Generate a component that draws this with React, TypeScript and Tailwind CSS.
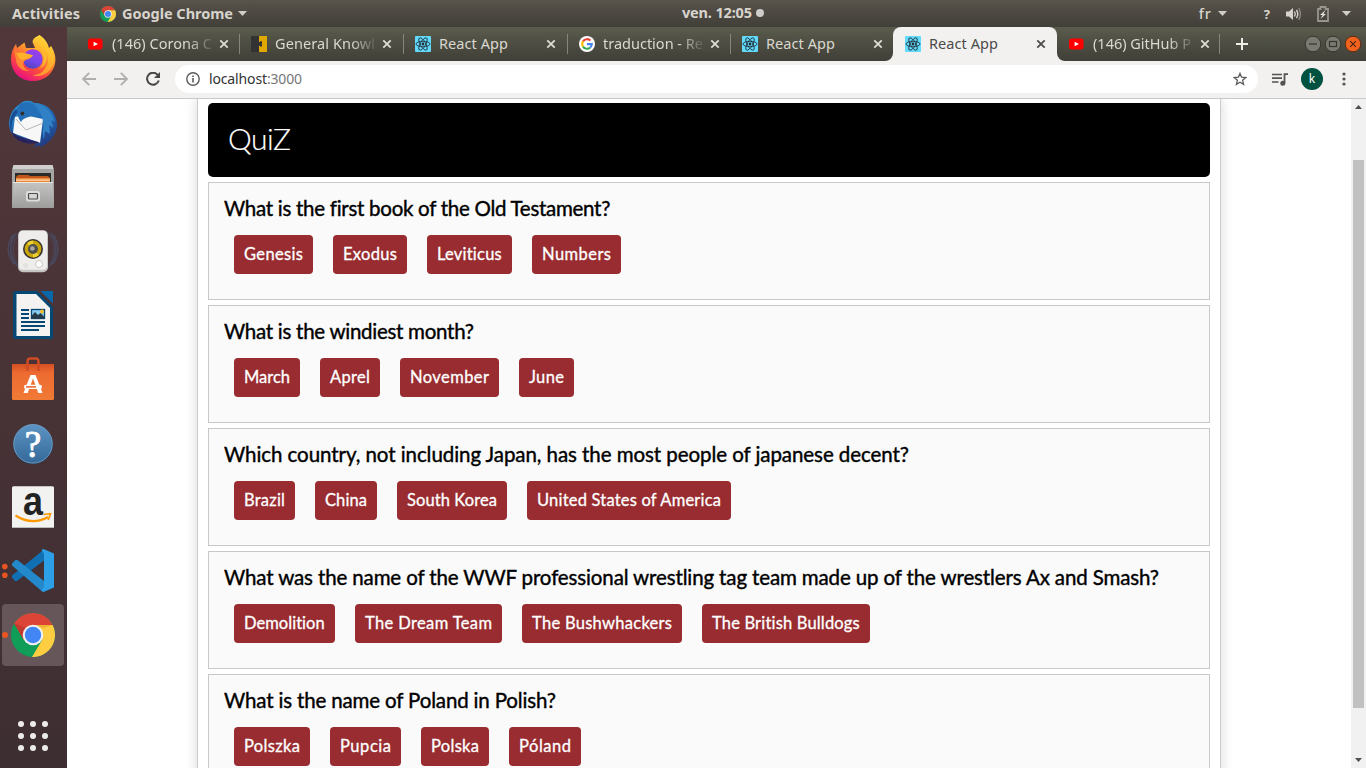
import { useLayoutEffect, useRef } from "react";
import type { ReactNode } from "react";

/** One line of text whose letter spacing is tuned so that it fills `width` pixels. */
function FitText({ text, width, className = "" }: { text: string; width: number; className?: string }) {
  const ref = useRef<HTMLSpanElement>(null);
  useLayoutEffect(() => {
    const el = ref.current;
    if (!el) return;
    el.style.letterSpacing = "0px";
    const natural = el.getBoundingClientRect().width;
    const spacing = (width - natural) / Math.max(1, text.length - 1);
    el.style.letterSpacing = `${spacing}px`;
    el.style.marginRight = `${-spacing}px`;
  }, [text, width]);
  return (
    <span ref={ref} className={`inline-block shrink-0 whitespace-pre ${className}`}>
      {text}
    </span>
  );
}

function ChromeLogo({ size }: { size: number }) {
  return (
    <svg width={size} height={size} viewBox="0 0 44 44" className="shrink-0">
      <circle cx="22" cy="22" r="22" fill="#109d58" />
      <path d="M3.2 10.6A22 22 0 0 1 41.6 12H22L12.5 26.5Z" fill="#dc4437" />
      <path d="M41.6 12A22 22 0 0 1 21 44L31.4 26.5L22 12Z" fill="#ffcd41" />
      <path d="M3.2 10.6L12.8 27L15 15Z" fill="#b8352b" opacity=".7" />
      <path d="M22 12H41.6L32 15Z" fill="#e3a52c" opacity=".6" />
      <circle cx="22" cy="22" r="10.3" fill="#f1f1f1" />
      <circle cx="22" cy="22" r="8.2" fill="#4285f4" />
    </svg>
  );
}

function YoutubeIcon() {
  return (
    <svg width="16" height="16" viewBox="0 0 16 16" className="shrink-0">
      <rect x="0" y="2.5" width="14.5" height="11" rx="2.8" fill="#f00" />
      <path d="M5.6 5.7L10 8L5.6 10.3Z" fill="#fff" />
    </svg>
  );
}

function ReactIcon() {
  return (
    <svg width="16" height="16" viewBox="0 0 16 16" className="shrink-0">
      <rect width="16" height="16" rx="1" fill="#61dafb" />
      <g fill="none" stroke="#20303a" strokeWidth=".85">
        <ellipse cx="8" cy="8" rx="7" ry="2.7" />
        <ellipse cx="8" cy="8" rx="7" ry="2.7" transform="rotate(60 8 8)" />
        <ellipse cx="8" cy="8" rx="7" ry="2.7" transform="rotate(120 8 8)" />
      </g>
      <circle cx="8" cy="8" r="1.4" fill="#20303a" />
    </svg>
  );
}

function GoogleIcon() {
  return (
    <svg width="16" height="16" viewBox="0 0 16 16" className="shrink-0">
      <circle cx="8" cy="8" r="8" fill="#fff" />
      <g fill="none" strokeWidth="2.1">
        <path d="M4 5.4A4.8 4.8 0 0 1 11.5 4.6" stroke="#ea4335" />
        <path d="M4 10.6A4.9 4.9 0 0 1 4 5.4" stroke="#fbbc05" />
        <path d="M11.3 11.5A4.8 4.8 0 0 1 4 10.6" stroke="#34a853" />
        <path d="M8 8.1H12.8A4.8 4.8 0 0 1 11.3 11.5" stroke="#4285f4" />
      </g>
    </svg>
  );
}

function PuzzleIcon() {
  return (
    <svg width="16" height="16" viewBox="0 0 16 16" className="shrink-0">
      <rect width="8" height="16" fill="#333" />
      <rect x="8" width="8" height="16" fill="#e0a800" />
      <path d="M7.5 6H9V5.3H11V10.5H9V9.8H7.5Z" fill="#333" />
    </svg>
  );
}

function CloseIcon({ color }: { color: string }) {
  return (
    <svg width="10" height="10" viewBox="0 0 10 10" className="shrink-0">
      <path d="M1.3 1.3L8.7 8.7M8.7 1.3L1.3 8.7" stroke={color} strokeWidth="1.8" />
    </svg>
  );
}

type Tab = { icon: ReactNode; title: string; textWidth: number; width: string; active?: boolean; fade?: boolean; line?: boolean };

const tabs: Tab[] = [
  { icon: <YoutubeIcon />, title: "(146) Corona C", textWidth: 100, width: "w-[163px]", fade: true },
  { icon: <PuzzleIcon />, title: "General Knowl", textWidth: 100, width: "w-[164px]", fade: true, line: true },
  { icon: <ReactIcon />, title: "React App", textWidth: 69, width: "w-[164px]", line: true },
  { icon: <GoogleIcon />, title: "traduction - Re", textWidth: 100, width: "w-[163px]", fade: true, line: true },
  { icon: <ReactIcon />, title: "React App", textWidth: 69, width: "w-[163px]", line: true },
  { icon: <ReactIcon />, title: "React App", textWidth: 69, width: "w-[164px]", active: true },
  { icon: <YoutubeIcon />, title: "(146) GitHub P", textWidth: 98, width: "w-[163px]", fade: true },
];

function TabItem({ tab }: { tab: Tab }) {
  return (
    <div className={`relative flex h-[34px] shrink-0 items-center pl-3 ${tab.width} ${tab.active ? "rounded-t-lg bg-[#f2f1f0]" : ""}`}>
      {tab.line && <span className="absolute left-0 top-[7px] h-5 w-px bg-[#85857d]" />}
      {tab.active && (
        <>
          <svg className="absolute -left-2 bottom-0" width="8" height="8">
            <path d="M8 0V8H0A8 8 0 0 0 8 0Z" fill="#f2f1f0" />
          </svg>
          <svg className="absolute -right-2 bottom-0" width="8" height="8">
            <path d="M0 0V8H8A8 8 0 0 1 0 0Z" fill="#f2f1f0" />
          </svg>
        </>
      )}
      {tab.icon}
      <div
        className={`ml-2 flex w-[102px] overflow-hidden text-[14.5px] leading-5 ${tab.active ? "text-[#4b4b48]" : "text-[#dad8cf]"} ${
          tab.fade ? "[mask-image:linear-gradient(to_right,black_74%,transparent_102%)]" : ""
        }`}
      >
        <FitText text={tab.title} width={tab.textWidth} className="-mt-px mb-px" />
      </div>
      <span className="ml-[5px] flex">
        <CloseIcon color={tab.active ? "#4b4b48" : "#dedcd4"} />
      </span>
    </div>
  );
}

function DockSlot({ children, label }: { children: ReactNode; label: string }) {
  return (
    <svg width="67" height="64" viewBox="0 0 67 64" className="shrink-0" aria-label={label}>
      {children}
    </svg>
  );
}

function Dock() {
  return (
    <nav className="flex w-[67px] shrink-0 flex-col bg-linear-to-b from-[#52373a] to-[#3d2e32]">
      <div className="-mt-px flex flex-col">
        <DockSlot label="Firefox">
          <defs>
            <linearGradient id="ff" x1=".8" y1="0" x2=".25" y2="1">
              <stop offset="0" stopColor="#fff044" />
              <stop offset=".35" stopColor="#ffa52a" />
              <stop offset=".65" stopColor="#ff5038" />
              <stop offset="1" stopColor="#e5098a" />
            </linearGradient>
            <linearGradient id="ffb" x1=".7" y1="0" x2=".3" y2="1">
              <stop offset="0" stopColor="#a33ce8" />
              <stop offset=".55" stopColor="#7747ee" />
              <stop offset="1" stopColor="#4c46b8" />
            </linearGradient>
          </defs>
          <path d="M39.5 9C44 12 48 17 49 22L51.2 20C54 25 56 30 55.3 36C54 47 45 55 33 55C20 55 11 46 11 33C11 27 13 22 16 18L17 22L24.5 16.5L26 22L35 22L32.5 16C33 12 36 11 39.5 9Z" fill="url(#ff)" />
          <path d="M40 10C36 14 39 19 43 22C48 27 50 34 46 41C43 47 38 49 32 49C42 53 53 45 54 35C55 29 52 25 50.7 22.5L48.5 25C48 18 43 14 40 10Z" fill="#ffc52e" opacity=".65" />
          <circle cx="32.8" cy="33" r="9.8" fill="url(#ffb)" />
          <path d="M15 24C18 27 19 29 25 28.5L33 29.5C30.5 33.5 27 33 24.5 35C21 38 25 44 30 45C22 46 16 40 16 33C15 30 14.5 27 15 24Z" fill="#ff8932" />
          <path d="M17 27C20 25.5 26 27 33 29.3C30 33 26 32 23 34C20 34 17 30 17 27Z" fill="#ffb12c" />
          <path d="M33 23C39 21 43 26 43.5 31C44.5 36 42 41 38 43C45 41 48 34 46 28C44 23 39 20 33 23Z" fill="#ffba32" />
        </DockSlot>
        <DockSlot label="Thunderbird">
          <defs>
            <linearGradient id="tb" x1=".2" y1="0" x2=".7" y2="1">
              <stop offset="0" stopColor="#2f95d2" />
              <stop offset=".5" stopColor="#1f66b3" />
              <stop offset="1" stopColor="#233a80" />
            </linearGradient>
          </defs>
          <g transform="translate(0 1)">
            <path d="M20 13C24 8.5 31 9 34 12C46 11.5 57 21 57 34C57 43 50 52 39 57L41 54L33 56.5L37 52C21 52 9 45 9 33C9 25 13 17 20 13Z" fill="url(#tb)" />
            <path d="M23 17C16 23 10 29 12 39L14 45C9 39 8 26 15 19Z" fill="#184d94" />
            <path d="M15 26L24 24L43 28L40 52L13 42Z" fill="#f7f7f7" />
            <path d="M16 28L26 39L43 32" fill="none" stroke="#b5b5b5" strokeWidth="1" />
            <path d="M12 41C19 47 28 48 40 51.5C27 55 14 50 12 41Z" fill="#27235f" />
            <path d="M20 13C31 8 38 15 37 21C33 27 24 25 21 31C16 24 16 17 20 13Z" fill="#2470b8" />
            <path d="M34 12.5C46 14 52 21 55 31L51.5 29L53.5 37L49 34L50 43L45 40L44 48C41 42 45 35 42.5 28C41 22 38 17 34 12.5Z" fill="#2f80c4" />
            <circle cx="22.4" cy="22.5" r="1.9" fill="#342f31" />
          </g>
        </DockSlot>
        <DockSlot label="Files">
          <defs>
            <linearGradient id="cab" x1="0" y1="0" x2="0" y2="1">
              <stop offset="0" stopColor="#c4c4c2" />
              <stop offset="1" stopColor="#9d9d9b" />
            </linearGradient>
          </defs>
          <path d="M13.5 11H52.5L54 16V52.5Q54 54 52.5 54H13.5Q12 54 12 52.5V16Z" fill="#a5a5a3" />
          <path d="M13.5 11H52.5L53.5 15H12.5Z" fill="#cfcfcd" />
          <rect x="15" y="19" width="36" height="10" fill="#2c2b2a" />
          <path d="M16 23L18 21H28L30 22H48L50 24V29H16Z" fill="#c0571d" />
          <rect x="16" y="24" width="34" height="4" fill="#f0883a" />
          <rect x="16" y="25.5" width="34" height="1.2" fill="#ffe2b7" />
          <path d="M13.5 28H52.5L54 53Q54 54 52.5 54H13.5Q12 54 12 53Z" fill="url(#cab)" />
          <path d="M13 28.5H53" stroke="#e7e7e6" strokeWidth="1" />
          <rect x="26" y="37" width="14" height="10.5" rx="2.5" fill="#dededc" />
          <rect x="28.5" y="39.5" width="9" height="5.5" rx=".8" fill="#d5d5d3" stroke="#4c4c4a" strokeWidth="1.2" />
        </DockSlot>
        <DockSlot label="Rhythmbox">
          <g fill="none" stroke="#47597f" strokeWidth="1.5" opacity=".55">
            <path d="M16 15Q5 32 17 48M13 17Q3 32 14 46M51 15Q61 32 50 48M54 17Q62 32 53 46" />
            <path d="M21 12Q6 31 20 51M46 12Q61 31 47 51" opacity=".6" />
          </g>
          <rect x="18" y="12.2" width="30" height="42" rx="5" fill="#c6c5c1" />
          <rect x="19" y="12.7" width="28" height="39" rx="4" fill="#eeedeb" />
          <circle cx="33" cy="31" r="10" fill="#373532" />
          <circle cx="33" cy="31" r="8.4" fill="#c9a508" />
          <path d="M33 31L27 25A8.4 8.4 0 0 1 33 22.5ZM33 31L39 37A8.4 8.4 0 0 1 33 39.5Z" fill="#ecd02f" />
          <circle cx="33" cy="31" r="5" fill="#504e4a" />
          <circle cx="32.4" cy="30.5" r="2.3" fill="#aaa8a3" />
          <circle cx="39" cy="46" r="3.5" fill="#fff" stroke="#c9c8c3" />
          <path d="M24 46H27V49H24Z" fill="none" stroke="#d9d8d3" />
        </DockSlot>
        <DockSlot label="LibreOffice Writer">
          <path d="M16 9H37L53 25V55Q53 57 51 57H15Q13 57 13 55V12Q13 9 16 9Z" fill="#064874" />
          <path d="M16.5 12H36L50 26V54H16.5Z" fill="#f4f3f2" />
          <path d="M40.5 9H53V21.5Z" fill="#0969a8" />
          <g stroke="#064874" strokeWidth="2">
            <path d="M21 28H29M21 32H29M21 36H29M21 40H45M21 44H45M21 48H39" />
          </g>
          <rect x="31.5" y="27.5" width="13" height="9" fill="#89cdf0" stroke="#064874" strokeWidth="1.3" />
          <circle cx="42" cy="29.5" r="2" fill="#f3bb27" />
          <path d="M31.5 36.5V34L35 30L38 33L40.5 31L44.5 35V36.5Z" fill="#263b48" />
        </DockSlot>
        <DockSlot label="Ubuntu Software">
          <defs>
            <linearGradient id="bag" x1="0" y1="0" x2="0" y2="1">
              <stop offset="0" stopColor="#d54f22" />
              <stop offset=".25" stopColor="#ed6b32" />
              <stop offset="1" stopColor="#f17a35" />
            </linearGradient>
          </defs>
          <path d="M12 18H54V52.5Q54 54 52.5 54H13.5Q12 54 12 52.5Z" fill="url(#bag)" />
          <path d="M27.5 25V16Q27.5 12.5 30 12.5H36Q38.5 12.5 38.5 16V25" fill="none" stroke="#cf4c22" strokeWidth="2.5" />
          <path d="M23.5 47L30.5 29H35.5L42.5 47H38.3L33 32.5L27.7 47Z" fill="#fff" />
          <rect x="24" y="38.8" width="18" height="4.2" rx="2.1" fill="#fff" />
          <path d="M26 40.9H36" stroke="#ec6a31" strokeWidth="1.6" />
        </DockSlot>
        <DockSlot label="Help">
          <defs>
            <linearGradient id="hlp" x1="0" y1="0" x2="0" y2="1">
              <stop offset="0" stopColor="#5c94c3" />
              <stop offset="1" stopColor="#34699a" />
            </linearGradient>
          </defs>
          <circle cx="33" cy="34.3" r="20" fill="#27405c" />
          <circle cx="33" cy="33.8" r="19.3" fill="url(#hlp)" stroke="#7ca5c8" strokeWidth=".8" />
          <text x="33" y="47" textAnchor="middle" fill="#fff" stroke="#fff" strokeWidth=".9" fontSize="37" fontFamily="Liberation Serif, serif">?</text>
        </DockSlot>
        <DockSlot label="Amazon">
          <rect x="12" y="12.2" width="42" height="41.8" rx="1.5" fill="#f2f2f1" />
          <path d="M12 53.5H54" stroke="#bcbcba" strokeWidth="1" />
          <text x="33" y="41" textAnchor="middle" fill="#222" fontSize="40" fontFamily="Liberation Sans, sans-serif" fontWeight="bold" textLength="20" lengthAdjust="spacingAndGlyphs">a</text>
          <path d="M15.5 41.5Q32 52 48 43" fill="none" stroke="#ff9900" strokeWidth="2.3" />
          <path d="M43.5 40.5L50.5 39.7L48.2 46" fill="none" stroke="#ff9900" strokeWidth="1.7" />
        </DockSlot>
        <DockSlot label="Visual Studio Code">
          <circle cx="4.8" cy="28.6" r="2.8" fill="#e95420" />
          <circle cx="4.8" cy="37.2" r="2.8" fill="#e95420" />
          <path d="M12 37.5V39.5L15 43L17 43L44 22.5V11.5Z" fill="#1070b3" />
          <path d="M12 25.5L15.5 22L17.5 22L44 43V54L41 52.5L12 27.5Z" fill="#2489ca" />
          <path d="M43.5 11L54 15.5V49.5L43.5 54L41.5 53L44 49V16L41.5 12Z" fill="#2c9fe7" />
        </DockSlot>
        <div className="relative flex h-16 w-[67px] pl-0.5 pt-0.5">
          <div className="flex h-[62px] w-[62px] items-center justify-center rounded bg-[#675659]">
            <ChromeLogo size={44} />
          </div>
          <span className="absolute left-0.5 top-[30px] size-[5.5px] rounded-full bg-[#e95420]" />
        </div>
      </div>
      <div className="ml-[18px] mt-[55px] grid w-[30px] grid-cols-3 gap-1.5">
        {Array.from({ length: 9 }, (_, i) => (
          <span key={i} className="size-1.5 rounded-full bg-[#eeeceb]" />
        ))}
      </div>
    </nav>
  );
}

function CaretDown() {
  return (
    <svg width="9" height="5" viewBox="0 0 9 5">
      <path d="M0 0H9L4.5 5Z" fill="#cfcdc9" />
    </svg>
  );
}

function TopBar() {
  return (
    <header className="flex h-[27px] shrink-0 items-center bg-linear-to-b from-[#58534b] to-[#413f39] text-[14.5px] font-bold text-[#d8d4cd]">
      <div className="flex w-[682px] items-center pl-3">
        <FitText text="Activities" width={68} />
        <span className="ml-5 mr-[6px] flex">
          <ChromeLogo size={16} />
        </span>
        <FitText text="Google Chrome" width={111} />
        <span className="ml-[5px]">
          <CaretDown />
        </span>
      </div>
      <div className="flex items-center">
        <FitText text="ven. 12:05" width={70} className="-mt-px" />
        <span className="-mt-px ml-1 size-2 rounded-full bg-[#cfcdc9]" />
      </div>
      <div className="ml-auto flex items-center pr-[15px]">
        <FitText text="fr" width={12} className="font-medium" />
        <span className="ml-[7px]">
          <CaretDown />
        </span>
        <FitText text="?" width={7} className="ml-[37px] mt-0.5 text-[13px]" />
        <svg className="ml-4" width="16" height="14" viewBox="0 0 16 14">
          <path d="M0 4.5H3L7 1V13L3 9.5H0Z" fill="#d8d4cd" />
          <path d="M8.5 4.5Q10 7 8.5 9.5M10.5 2.8Q13 7 10.5 11.2" fill="none" stroke="#d8d4cd" strokeWidth="1.4" />
          <path d="M12.8 1.2Q16 7 12.8 12.8" fill="none" stroke="#8b8881" strokeWidth="1.4" />
        </svg>
        <svg className="ml-[15px]" width="12" height="16" viewBox="0 0 12 16">
          <path d="M1 3H3.5V1H8.5V3H11V15H1Z" fill="none" stroke="#98958e" strokeWidth="1.8" />
          <path d="M8.5 4L3 9H5.5L3.5 13L9 8H6.5Z" fill="#e2dfd9" />
        </svg>
        <span className="ml-[13px]">
          <CaretDown />
        </span>
      </div>
    </header>
  );
}

function TabStrip() {
  return (
    <div className="flex h-[34px] shrink-0 items-center bg-linear-to-b from-[#5a5c4c] to-[#403f39] pl-[9px]">
      {tabs.map((tab, i) => (
        <TabItem key={i} tab={tab} />
      ))}
      <span className="-ml-px h-5 w-px bg-[#85857d]" />
      <svg className="ml-4" width="12" height="12" viewBox="0 0 12 12">
        <path d="M6 0V12M0 6H12" stroke="#eeece6" strokeWidth="2" />
      </svg>
      <svg className="ml-auto mr-[4px]" width="58" height="18" viewBox="0 0 58 18">
        <circle cx="9" cy="9" r="7.8" fill="#7b7a72" stroke="#37362f" />
        <path d="M5 9H13" stroke="#35342f" strokeWidth="1.2" />
        <circle cx="29" cy="9" r="7.8" fill="#7b7a72" stroke="#37362f" />
        <rect x="25.5" y="6.5" width="7" height="5" fill="none" stroke="#35342f" strokeWidth="1.2" />
        <circle cx="49" cy="9" r="7.8" fill="#f2621f" stroke="#5b2d16" />
        <path d="M46.2 6.2L51.8 11.8M51.8 6.2L46.2 11.8" stroke="#4b2715" strokeWidth="1.2" />
      </svg>
    </div>
  );
}

function Toolbar() {
  return (
    <div className="flex h-[38px] shrink-0 items-center border-b border-[#cbc9c7] bg-[#f2f1f0] pb-px pl-[15px]">
      <svg width="14" height="14" viewBox="0 0 14 14" fill="none" stroke="#b0afae" strokeWidth="1.8">
        <path d="M14 7H1.5M7.2 .8L1 7L7.2 13.2" />
      </svg>
      <svg className="ml-[18px]" width="14" height="14" viewBox="0 0 14 14" fill="none" stroke="#b0afae" strokeWidth="1.8">
        <path d="M0 7H12.5M6.8 .8L13 7L6.8 13.2" />
      </svg>
      <svg className="ml-[18px]" width="14" height="14" viewBox="0 0 14 14">
        <path d="M11.8 3A6 6 0 1 0 12.8 8.5" fill="none" stroke="#484846" strokeWidth="2" />
        <path d="M14 0V6H8Z" fill="#484846" />
      </svg>
      <div className="ml-[15px] flex h-7 w-[1083px] items-center rounded-full bg-white pl-[11px] pr-[11px]">
        <svg width="14" height="14" viewBox="0 0 14 14">
          <circle cx="7" cy="7" r="6.2" fill="none" stroke="#5b5b5b" strokeWidth="1.4" />
          <path d="M7 6V10.4M7 3.4V4.9" stroke="#5b5b5b" strokeWidth="1.6" />
        </svg>
        <div className="ml-[9px] flex text-[14px] leading-5">
          <FitText text="localhost" width={58} className="text-[#333]" />
          <FitText text=":3000" width={35} className="text-[#777]" />
        </div>
        <svg className="ml-auto" width="14" height="14" viewBox="0 0 14 14">
          <path d="M7 1.4L8.6 5.2L12.8 5.6L9.6 8.3L10.6 12.4L7 10.2L3.4 12.4L4.4 8.3L1.2 5.6L5.4 5.2Z" fill="none" stroke="#5b5b5b" strokeWidth="1.3" />
        </svg>
      </div>
      <svg className="ml-[14px]" width="16" height="13" viewBox="0 0 16 13">
        <path d="M0 1.5H10M0 5.2H10M0 9H6.5" stroke="#535352" strokeWidth="1.7" />
        <path d="M12.5 10.2V1.2H16" fill="none" stroke="#535352" strokeWidth="1.8" />
        <circle cx="10.8" cy="10.3" r="2.5" fill="#535352" />
      </svg>
      <span className="ml-[13px] flex size-[22px] items-center justify-center rounded-full bg-[#00513f] text-[12px] text-white">k</span>
      <svg className="ml-[19px]" width="4" height="14" viewBox="0 0 4 14" fill="#535352">
        <circle cx="2" cy="2" r="1.6" />
        <circle cx="2" cy="7" r="1.6" />
        <circle cx="2" cy="12" r="1.6" />
      </svg>
    </div>
  );
}

type Question = { text: string; width: number; answers: [string, number][] };

const questions: Question[] = [
  {
    text: "What is the first book of the Old Testament?",
    width: 386,
    answers: [["Genesis", 59], ["Exodus", 54], ["Leviticus", 65], ["Numbers", 69]],
  },
  {
    text: "What is the windiest month?",
    width: 250,
    answers: [["March", 46], ["Aprel", 40], ["November", 79], ["June", 35]],
  },
  {
    text: "Which country, not including Japan, has the most people of japanese decent?",
    width: 685,
    answers: [["Brazil", 41], ["China", 42], ["South Korea", 90], ["United States of America", 184]],
  },
  {
    text: "What was the name of the WWF professional wrestling tag team made up of the wrestlers Ax and Smash?",
    width: 935,
    answers: [["Demolition", 81], ["The Dream Team", 127], ["The Bushwhackers", 140], ["The British Bulldogs", 148]],
  },
  {
    text: "What is the name of Poland in Polish?",
    width: 332,
    answers: [["Polszka", 56], ["Pupcia", 51], ["Polska", 48], ["Póland", 52]],
  },
];

function QuestionCard({ question }: { question: Question }) {
  return (
    <section className="mt-[5px] h-[118px] shrink-0 border border-[#c8c8c8] bg-[#fafafa] pl-[15px] pt-2.5">
      <h2 className="flex h-[31px] items-center text-[20.5px] text-black [-webkit-text-stroke:0.4px_black]">
        <FitText text={question.text} width={question.width} />
      </h2>
      <div className="ml-2.5 mt-[11px] flex gap-5">
        {question.answers.map(([label, width]) => (
          <button
            key={label}
            className="flex h-[39px] items-center rounded bg-[#982c30] px-2.5 text-[16.5px] text-white [-webkit-text-stroke:0.3px_white]"
          >
            <span className="flex" style={{ width }}>
              <FitText text={label} width={width} />
            </span>
          </button>
        ))}
      </div>
    </section>
  );
}

function Page() {
  return (
    <div className="flex min-h-0 flex-1 bg-white">
      <main className="flex min-w-0 flex-1 justify-center overflow-hidden font-['Lato',sans-serif]">
        <div className="flex h-[720px] w-[1024px] shrink-0 flex-col border-x border-[#ccc] px-[10px] pt-1 shadow-[0_0_12px_rgba(0,0,0,0.16)]">
          <h1 className="flex h-[74px] shrink-0 items-center rounded-[5px] bg-black pb-[3px] pl-5 text-[30px] font-light text-white [-webkit-text-stroke:0.2px_white]">
            <FitText text="QuiZ" width={63} />
          </h1>
          {questions.map((q) => (
            <QuestionCard key={q.text} question={q} />
          ))}
        </div>
      </main>
      <div className="flex w-[15px] shrink-0 flex-col items-center bg-[#f1f1f1]">
        <svg className="mt-1.5 shrink-0" width="7" height="4" viewBox="0 0 7 4">
          <path d="M3.5 0L7 4H0Z" fill="#505050" />
        </svg>
        <div className="mt-[51px] h-[548px] w-[11px] shrink-0 bg-[#c1c1c1]" />
        <svg className="mt-auto mb-1.5 shrink-0" width="7" height="4" viewBox="0 0 7 4">
          <path d="M0 0H7L3.5 4Z" fill="#505050" />
        </svg>
      </div>
    </div>
  );
}

export default function App() {
  return (
    <div className="flex h-[768px] w-[1366px] flex-col overflow-hidden font-['Noto_Sans',sans-serif]">
      <TopBar />
      <div className="flex min-h-0 flex-1">
        <Dock />
        <div className="flex min-w-0 flex-1 flex-col">
          <TabStrip />
          <Toolbar />
          <Page />
        </div>
      </div>
    </div>
  );
}
